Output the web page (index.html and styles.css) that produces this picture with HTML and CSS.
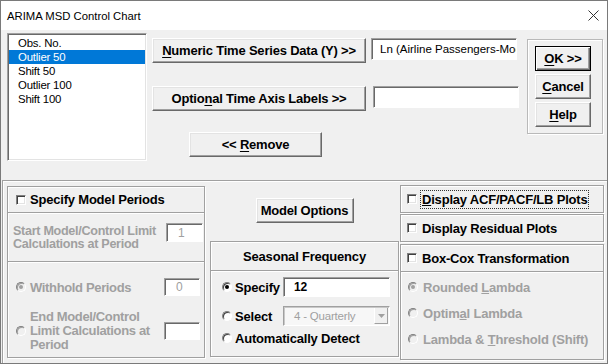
FILE: index.html
```html
<!DOCTYPE html>
<html lang="en">
<head>
  <meta charset="UTF-8" />
  <title>ARIMA MSD Control Chart</title>
  <link rel="stylesheet" href="styles.css">
</head>
<body>
  <div class="window">
    <div class="titlebar">
      <span class="title">ARIMA MSD Control Chart</span>
      <svg class="close" width="11" height="11" viewBox="0 0 11 11">
        <path d="M0.5 0.5 L10.5 10.5 M10.5 0.5 L0.5 10.5" stroke="#333" stroke-width="1" fill="none" />
      </svg>
    </div>

    <div class="client">
      <div class="top">
        <ul class="listbox">
          <li>Obs. No.</li>
          <li class="sel">Outlier 50</li>
          <li>Shift 50</li>
          <li>Outlier 100</li>
          <li>Shift 100</li>
        </ul>

        <div class="data">
          <div class="data-row">
            <button class="btn wide"><u>N</u>umeric Time Series Data (Y) &gt;&gt;</button>
            <div class="edit series">Ln (Airline Passengers-Model)</div>
          </div>
          <div class="data-row second">
            <button class="btn wide">Optio<u>n</u>al Time Axis Labels &gt;&gt;</button>
            <div class="edit labels"></div>
          </div>
          <button class="btn remove">&lt;&lt; <u>R</u>emove</button>
        </div>

        <div class="cmds">
          <button class="btn cmd default"><u>O</u>K &gt;&gt;</button>
          <button class="btn cmd"><u>C</u>ancel</button>
          <button class="btn cmd"><u>H</u>elp</button>
        </div>
      </div>

      <div class="bottom">
        <!-- model periods -->
        <div class="col periods">
          <div class="hdr">
            <span class="check"></span>
            <span>Specify Model Periods</span>
          </div>
          <div class="start">
            <div class="start-label off">Start Model/Control Limit<br>Calculations at Period</div>
            <div class="edit small start-box">1</div>
          </div>
          <div class="withhold">
            <div class="opt-row">
              <span class="radio on off-radio"></span>
              <span class="grow off">Withhold Periods</span>
              <div class="edit small">0</div>
            </div>
            <div class="opt-row end">
              <span class="radio off-radio"></span>
              <span class="grow off end-label">End Model/Control<br>Limit Calculations at<br>Period</span>
              <div class="edit small"></div>
            </div>
          </div>
        </div>

        <!-- options + seasonal -->
        <div class="col middle">
          <div class="model-opts">
            <button class="btn opts">Model Options</button>
          </div>
          <div class="season">
            <div class="season-hdr">Seasonal Frequency</div>
            <div class="season-body">
              <div class="s-row">
                <label class="s-label"><span class="radio on"></span>Specify</label>
                <div class="edit freq">12</div>
              </div>
              <div class="s-row">
                <label class="s-label"><span class="radio"></span>Select</label>
                <div class="combo">
                  <span>4 - Quarterly</span>
                  <span class="combo-btn">
                    <svg width="7" height="4" viewBox="0 0 7 4"><path d="M0 0 H7 L3.5 4 Z" fill="#a0a0a0" /></svg>
                  </span>
                </div>
              </div>
              <div class="s-row">
                <label class="s-label"><span class="radio"></span>Automatically Detect</label>
              </div>
            </div>
          </div>
        </div>

        <!-- display options -->
        <div class="col display">
          <div class="box row-box">
            <span class="check"></span>
            <span class="focus"><u>D</u>isplay ACF/PACF/LB Plots</span>
          </div>
          <div class="box row-box">
            <span class="check"></span>
            <span>Display Residual Plots</span>
          </div>
          <div class="box boxcox">
            <div class="row-box inner">
              <span class="check"></span>
              <span>Box-Cox Transformation</span>
            </div>
            <div class="lambda">
              <div class="l-row off"><span class="radio on off-radio"></span><span>Rounded <u>L</u>ambda</span></div>
              <div class="l-row off"><span class="radio off-radio"></span><span>Optim<u>a</u>l Lambda</span></div>
              <div class="l-row off"><span class="radio off-radio"></span><span>Lambda &amp; <u>T</u>hreshold (Shift)</span></div>
            </div>
          </div>
        </div>
      </div>
    </div>
  </div>
</body>
</html>
```

FILE: styles.css
```css
* {
  box-sizing: border-box;
}
body {
  margin: 0;
  font-family: "Liberation Sans", Arial, sans-serif;
  background: #fff;
}
.window {
  width: 608px;
  height: 364px;
  border: 1px solid #7a7a7a;
  background: #f0f0f0;
}
.titlebar {
  height: 29px;
  background: #fff;
  display: flex;
  align-items: center;
  justify-content: space-between;
  padding: 0 8px 0 6px;
}
.title {
  font-size: 11.3px;
  color: #000;
}
.close {
  display: block;
}

/* top area */
.top {
  height: 150px;
  display: flex;
  align-items: flex-start;
}
.listbox {
  list-style: none;
  margin: 3px 0 0 6px;
  padding: 2px 1px;
  width: 140px;
  height: 128px;
  background: #fff;
  border-top: 1px solid #a0a0a0;
  border-left: 1px solid #a0a0a0;
  border-right: 1px solid #fff;
  border-bottom: 1px solid #fff;
  box-shadow: inset 1px 1px 0 #696969, inset -1px -1px 0 #e3e3e3;
  font-size: 11.4px;
}
.listbox li {
  height: 14px;
  line-height: 14px;
  padding-left: 9px;
  color: #000;
  letter-spacing: -0.2px;
}
.listbox li.sel {
  background: #0078d7;
  color: #fff;
}
.data {
  margin: 8px 0 0 5px;
  width: 367px;
}
.data-row {
  display: flex;
  align-items: flex-start;
  gap: 5px;
}
.data-row.second {
  margin-top: 23px;
  gap: 7px;
}
.btn {
  font-family: "Liberation Sans", Arial, sans-serif;
  font-weight: bold;
  font-size: 13px;
  letter-spacing: -0.2px;
  color: #000;
  background: #f0f0f0;
  padding: 0;
  border-top: 1px solid #fff;
  border-left: 1px solid #fff;
  border-right: 1px solid #696969;
  border-bottom: 1px solid #696969;
  box-shadow: inset -1px -1px 0 #a0a0a0, inset 1px 1px 0 #e3e3e3;
  border-radius: 0;
}
.btn u {
  text-decoration-thickness: 1px;
  text-underline-offset: 2px;
}
.wide {
  width: 214px;
  height: 25px;
  flex: none;
}
.remove {
  width: 133px;
  height: 25px;
  margin: 21px 0 0 37px;
  display: block;
}
.edit {
  background: #fff;
  border-top: 1px solid #a0a0a0;
  border-left: 1px solid #a0a0a0;
  border-right: 1px solid #fff;
  border-bottom: 1px solid #fff;
  box-shadow: inset 1px 1px 0 #696969;
  font-size: 12px;
  white-space: nowrap;
  overflow: hidden;
}
.series {
  width: 146px;
  height: 22px;
  line-height: 20px;
  padding-left: 8px;
  font-size: 11.5px;
}
.labels {
  width: 146px;
  height: 22px;
}
.cmds {
  margin: 9px 0 0 8px;
  width: 76px;
  height: 95px;
  border: 1px solid #b9b9b9;
  box-shadow: inset 1px 1px 0 #fff, 1px 1px 0 #fff;
  padding: 6px 0 0 7px;
  display: flex;
  flex-direction: column;
  gap: 3px;
}
.cmd {
  width: 56px;
  height: 25px;
}
.cmd.default {
  border: 1px solid #000;
  box-shadow: inset 1px 1px 0 #fff, inset -1px -1px 0 #696969, inset -2px -2px 0 #a0a0a0;
}

/* bottom area */
.bottom {
  margin-left: 1px;
  width: 605px;
  height: 183px;
  border-top: 1px solid #a0a0a0;
  border-left: 1px solid #a0a0a0;
  box-shadow: inset 1px 1px 0 #fff;
  display: flex;
  align-items: flex-start;
  padding: 5px 0 0 4px;
  font-size: 13px;
  font-weight: bold;
  letter-spacing: -0.2px;
}
.col {
  flex: none;
}
.box,
.periods,
.season {
  border: 1px solid #a0a0a0;
  box-shadow: inset 1px 1px 0 #fff, 1px 1px 0 #fff;
}
.off {
  color: #a0a0a0;
}
.check {
  width: 10px;
  height: 10px;
  flex: none;
  background: #fff;
  border-top: 1px solid #808080;
  border-left: 1px solid #808080;
  border-right: 1px solid #fff;
  border-bottom: 1px solid #fff;
  box-shadow: inset 1px 1px 0 #404040, inset -1px -1px 0 #e3e3e3;
}
.radio {
  position: relative;
  width: 10px;
  height: 10px;
  flex: none;
  border-radius: 50%;
  background: #fff;
  border: 1px solid;
  border-color: #808080 #fff #fff #808080;
  box-shadow: inset 1px 1px 0 #404040;
}
.radio.on::after {
  content: "";
  position: absolute;
  left: 2px;
  top: 2px;
  width: 4px;
  height: 4px;
  border-radius: 50%;
  background: #000;
}
.radio.off-radio {
  background: #f0f0f0;
  box-shadow: inset 1px 1px 0 #a0a0a0;
}
.radio.off-radio::after {
  background: #a0a0a0;
}

/* model periods */
.periods {
  width: 198px;
  height: 172px;
}
.hdr {
  height: 26px;
  display: flex;
  align-items: center;
  gap: 4px;
  padding-left: 8px;
  border-bottom: 1px solid #a0a0a0;
  box-shadow: 0 1px 0 #fff;
}
.start {
  height: 49px;
  display: flex;
  align-items: flex-start;
  padding-left: 5px;
  border-bottom: 1px solid #a0a0a0;
  box-shadow: 0 1px 0 #fff;
}
.start-label {
  width: 153px;
  margin-top: 12px;
  font-size: 12.6px;
  line-height: 13px;
  letter-spacing: -0.3px;
}
.small {
  width: 37px;
  height: 19px;
  line-height: 18px;
  padding-left: 11px;
  color: #a0a0a0;
  font-weight: normal;
}
.start-box {
  margin-top: 10px;
}
.withhold {
  padding: 16px 0 0 8px;
}
.opt-row {
  display: flex;
  align-items: center;
  gap: 4px;
  height: 18px;
}
.opt-row .small {
  width: 36px;
  height: 18px;
  line-height: 17px;
  margin-right: 4px;
}
.opt-row.end {
  margin-top: 14px;
  height: 42px;
}
.grow {
  flex: 1;
  letter-spacing: -0.35px;
}
.end-label {
  line-height: 14px;
}

/* middle */
.middle {
  width: 191px;
  margin-left: 4px;
}
.model-opts {
  height: 55px;
  padding-top: 12px;
  display: flex;
  justify-content: center;
}
.opts {
  width: 98px;
  height: 25px;
}
.season {
  margin-left: 1px;
  width: 189px;
  height: 116px;
}
.season-hdr {
  height: 29px;
  line-height: 29px;
  text-align: center;
  border-bottom: 1px solid #a0a0a0;
  box-shadow: 0 1px 0 #fff;
}
.season-body {
  padding: 6px 0 0 11px;
}
.s-row {
  display: flex;
  align-items: center;
  height: 20px;
  margin-bottom: 9px;
}
.s-row:last-child {
  height: 18px;
  margin-top: -6px;
}
.s-label {
  display: flex;
  align-items: center;
  gap: 3px;
  width: 61px;
  white-space: nowrap;
}
.freq {
  width: 107px;
  height: 20px;
  line-height: 19px;
  padding-left: 10px;
  font-weight: bold;
  font-size: 12px;
  color: #000;
}
.combo {
  width: 107px;
  height: 20px;
  display: flex;
  align-items: center;
  justify-content: space-between;
  padding-left: 10px;
  background: #f7f7f7;
  border-top: 1px solid #a0a0a0;
  border-left: 1px solid #a0a0a0;
  border-right: 1px solid #fff;
  border-bottom: 1px solid #fff;
  box-shadow: inset 1px 1px 0 #c8c8c8;
  font-weight: normal;
  font-size: 11.5px;
  color: #a0a0a0;
}
.combo-btn {
  width: 14px;
  height: 16px;
  margin-right: 1px;
  display: flex;
  align-items: center;
  justify-content: center;
  background: #f0f0f0;
  border-right: 1px solid #a0a0a0;
  border-bottom: 1px solid #a0a0a0;
  border-left: 1px solid #fff;
}

/* display options */
.display {
  width: 204px;
  margin: -1px 0 0 0;
}
.row-box {
  height: 28px;
  display: flex;
  align-items: center;
  padding-left: 6px;
  gap: 5px;
}
.box + .box {
  margin-top: 1px;
}
.box.boxcox {
  margin-top: 2px;
  height: 116px;
}
.row-box.inner {
  height: 27px;
  border-bottom: 1px solid #a0a0a0;
  box-shadow: 0 1px 0 #fff;
}
.focus {
  outline: 1px dotted #333;
  outline-offset: 1px;
}
.lambda {
  padding: 6px 0 0 7px;
}
.l-row {
  display: flex;
  align-items: center;
  gap: 5px;
  height: 18px;
  margin-bottom: 8px;
}
```
